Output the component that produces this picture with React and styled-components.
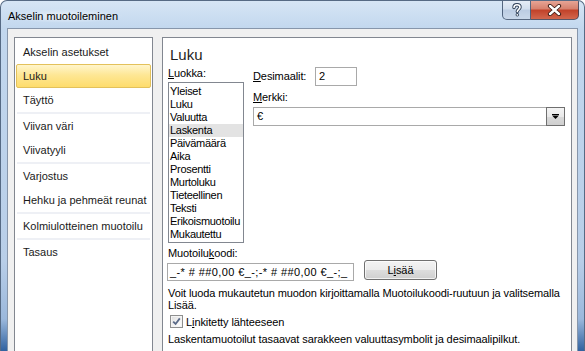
import React, { useState } from "react";
import styled, { createGlobalStyle, css } from "styled-components";

const GlobalStyle = createGlobalStyle`
  html, body {
    margin: 0;
    padding: 0;
  }
  body {
    width: 585px;
    height: 351px;
    overflow: hidden;
    font-family: "Liberation Sans", Arial, sans-serif;
    font-size: 11px;
    color: #000;
  }
`;

const Window = styled.div`
  box-sizing: border-box;
  width: 585px;
  height: 351px;
  display: flex;
  flex-direction: column;
  padding: 0 6px;
  border: 1px solid #566a84;
  border-bottom: none;
  border-radius: 7px 7px 0 0;
  overflow: hidden;
  background: linear-gradient(
    180deg,
    #d6e5f5 0px,
    #c2d7ee 28px,
    #b8cee8 260px,
    #9bb8dc 318px,
    #2d5f9e 351px
  );
`;

const TitleBar = styled.div`
  height: 27px;
  display: flex;
  align-items: flex-start;
  justify-content: space-between;
`;

const TitleText = styled.div`
  margin-top: 8px;
  padding: 0 6px 0 1px;
  line-height: 14px;
  font-size: 11px;
  color: #000;
  background: radial-gradient(ellipse at center, rgba(255, 255, 255, 0.6), rgba(255, 255, 255, 0) 70%);
`;

const CaptionButtons = styled.div`
  display: flex;
  margin-top: -1px;
  margin-right: -1px;
`;

const CaptionButton = styled.div`
  box-sizing: border-box;
  height: 20px;
  display: flex;
  align-items: center;
  justify-content: center;
  border: 1px solid rgba(40, 60, 90, 0.75);
  border-top: none;
  ${p =>
    p.$close
      ? css`
          width: 48px;
          border-left: none;
          border-radius: 0 0 5px 0;
          background: linear-gradient(180deg, #e9a99a 0%, #d7826f 45%, #c2432b 55%, #d2674e 100%);
        `
      : css`
          width: 29px;
          border-radius: 0 0 0 5px;
          background: linear-gradient(180deg, #e7eef7 0%, #d3dfee 45%, #bccde3 55%, #c9d8ea 100%);
        `}
`;

const Client = styled.div`
  flex: 1;
  display: flex;
  gap: 9px;
  padding: 8px 5px 0 6px;
  background: #f0f0f0;
  border: 1px solid #8796ab;
  border-bottom: none;
  min-height: 0;
`;

const NavPanel = styled.div`
  box-sizing: border-box;
  width: 139px;
  flex-shrink: 0;
  padding: 2px 1px 0;
  background: #fff;
  border: 1px solid #828790;
  border-bottom: none;
`;

const NavItem = styled.div`
  box-sizing: border-box;
  height: 24px;
  padding: 0 6px;
  line-height: 22px;
  border: 1px solid transparent;
  border-radius: 2px;
  color: #1a1a1a;
  white-space: nowrap;
  ${p =>
    p.$selected &&
    css`
      border-color: #e3c15b;
      background: linear-gradient(180deg, #fff5cc 0%, #fee795 45%, #fedc6c 100%);
    `}
`;

const NavSeparator = styled.div`
  height: 2px;
  margin: 0 1px;
  background: #eef0f5;
`;

const ContentPanel = styled.div`
  flex: 1;
  box-sizing: border-box;
  padding: 7px 5px 0;
  background: #fff;
  border: 1px solid #828790;
  border-bottom: none;
  letter-spacing: -0.1px;
`;

const Heading = styled.div`
  margin-left: 2px;
  font-size: 15px;
  line-height: 20px;
  letter-spacing: 0;
  color: #1e1e1e;
`;

const TopRow = styled.div`
  display: flex;
  gap: 9px;
  margin-top: 2px;
`;

const CategoryColumn = styled.div`
  width: 76px;
  flex-shrink: 0;
`;

const Label = styled.div`
  line-height: 13px;
  white-space: nowrap;
  margin-top: ${p => p.$gap || 0}px;
`;

const Key = styled.u`
  text-decoration: underline;
  text-underline-offset: 1px;
`;

const ListBox = styled.div`
  box-sizing: border-box;
  margin-top: 2px;
  padding: 2px 0 1px;
  border: 1px solid #828790;
  background: #fff;
  overflow: hidden;
`;

const ListItem = styled.div`
  height: 13px;
  line-height: 13px;
  padding-left: 1px;
  letter-spacing: -0.3px;
  white-space: nowrap;
  background: ${p => (p.$selected ? "#e3e3e3" : "transparent")};
`;

const SettingsColumn = styled.div`
  flex: 1;
  display: flex;
  flex-direction: column;
`;

const FieldRow = styled.div`
  display: flex;
  align-items: center;
`;

const TextBox = styled.div`
  box-sizing: border-box;
  height: ${p => p.$height || 19}px;
  width: ${p => (p.$width ? `${p.$width}px` : "auto")};
  padding: 0 3px;
  line-height: ${p => (p.$height || 19) - 2}px;
  border: 1px solid #a9a9a9;
  background: #fff;
  white-space: nowrap;
  overflow: hidden;
`;

const DecimalsLabel = styled(Label)`
  width: 62px;
`;

const ComboBox = styled.div`
  box-sizing: border-box;
  margin-top: 3px;
  margin-right: 1px;
  height: 19px;
  display: flex;
  border: 1px solid #a9a9a9;
  background: #fff;
`;

const ComboValue = styled.div`
  flex: 1;
  padding-left: 3px;
  line-height: 17px;
`;

const ComboArrow = styled.div`
  box-sizing: border-box;
  width: 19px;
  margin: -1px -1px -1px 0;
  display: flex;
  align-items: center;
  justify-content: center;
  border: 1px solid #6f6f6f;
  background: linear-gradient(180deg, #f4f4f4 0%, #e9e9e9 50%, #d9d9d9 51%, #cfcfcf 100%);
`;

const CodeRow = styled.div`
  display: flex;
  align-items: flex-start;
  gap: 10px;
  margin-left: -1px;
`;

const CodeBox = styled(TextBox)`
  margin-top: 3px;
  padding-left: 2px;
  letter-spacing: 0.4px;
`;

const PushButton = styled.div`
  box-sizing: border-box;
  width: 73px;
  height: 20px;
  line-height: 18px;
  text-align: center;
  border: 1px solid #707070;
  border-radius: 3px;
  background: linear-gradient(180deg, #f3f3f3 0%, #ebebeb 50%, #dddddd 51%, #cfcfcf 100%);
  box-shadow: inset 0 0 0 1px rgba(255, 255, 255, 0.7);
`;

const Paragraph = styled.div`
  margin-top: 6px;
  line-height: 12px;
  white-space: nowrap;
`;

const CheckRow = styled.label`
  display: flex;
  align-items: center;
  gap: 3px;
  margin: 4px 0 0 2px;
  height: 13px;
`;

const CheckBox = styled.span`
  box-sizing: border-box;
  width: 13px;
  height: 13px;
  display: flex;
  align-items: center;
  justify-content: center;
  border: 1px solid #8e8f8f;
  background: linear-gradient(135deg, #dcdcdc 0%, #f5f5f5 60%, #ffffff 100%);
  box-shadow: inset 0 0 0 1px #f4f4f4;
`;

const Note = styled.div`
  margin-top: 5px;
  line-height: 12px;
  white-space: nowrap;
`;

const navGroups = [
  ["Akselin asetukset", "Luku", "Täyttö"],
  ["Viivan väri", "Viivatyyli"],
  ["Varjostus", "Hehku ja pehmeät reunat"],
  ["Kolmiulotteinen muotoilu"],
  ["Tasaus"],
];

const categories = [
  "Yleiset",
  "Luku",
  "Valuutta",
  "Laskenta",
  "Päivämäärä",
  "Aika",
  "Prosentti",
  "Murtoluku",
  "Tieteellinen",
  "Teksti",
  "Erikoismuotoilu",
  "Mukautettu",
];

const HelpGlyph = () => (
  <svg width="12" height="14" viewBox="0 0 12 14">
    <path
      d="M3 4.5 C3 2.5 4.5 1.8 6 1.8 C7.8 1.8 9 2.8 9 4.3 C9 6.2 6.3 6.4 6.3 8.6"
      fill="none"
      stroke="#2e3f57"
      strokeWidth="3.4"
      strokeLinecap="round"
    />
    <circle cx="6.3" cy="11.8" r="1.7" fill="#2e3f57" />
    <path
      d="M3 4.5 C3 2.5 4.5 1.8 6 1.8 C7.8 1.8 9 2.8 9 4.3 C9 6.2 6.3 6.4 6.3 8.6"
      fill="none"
      stroke="#fff"
      strokeWidth="1.6"
      strokeLinecap="round"
    />
    <circle cx="6.3" cy="11.8" r="0.9" fill="#fff" />
  </svg>
);

const CloseGlyph = () => (
  <svg width="15" height="12" viewBox="0 0 15 12">
    <path d="M3 2 L12 10 M12 2 L3 10" stroke="#3b1a14" strokeWidth="4.2" strokeLinecap="round" />
    <path d="M3 2 L12 10 M12 2 L3 10" stroke="#fff" strokeWidth="2.4" strokeLinecap="round" />
  </svg>
);

const ArrowGlyph = () => (
  <svg width="7" height="5" viewBox="0 0 7 5">
    <rect x="0" y="0" width="7" height="1" fill="#000" />
    <path d="M0 1.5 H7 L3.5 5 Z" fill="#000" />
  </svg>
);

const CheckGlyph = () => (
  <svg width="9" height="9" viewBox="0 0 9 9">
    <path d="M1.2 4.6 L3.6 7 L7.8 1.4" fill="none" stroke="#5a6a88" strokeWidth="1.8" />
  </svg>
);

const App = () => {
  const [selectedNav] = useState("Luku");
  const [selectedCategory] = useState("Laskenta");
  const [linked, setLinked] = useState(true);

  return (
    <>
      <GlobalStyle />
      <Window>
        <TitleBar>
          <TitleText>Akselin muotoileminen</TitleText>
          <CaptionButtons>
            <CaptionButton>
              <HelpGlyph />
            </CaptionButton>
            <CaptionButton $close>
              <CloseGlyph />
            </CaptionButton>
          </CaptionButtons>
        </TitleBar>
        <Client>
          <NavPanel>
            {navGroups.map((group, gi) => (
              <React.Fragment key={gi}>
                {gi > 0 && <NavSeparator />}
                {group.map(item => (
                  <NavItem key={item} $selected={item === selectedNav}>
                    {item}
                  </NavItem>
                ))}
              </React.Fragment>
            ))}
          </NavPanel>
          <ContentPanel>
            <Heading>Luku</Heading>
            <TopRow>
              <CategoryColumn>
                <Label>
                  <Key>L</Key>uokka:
                </Label>
                <ListBox>
                  {categories.map(c => (
                    <ListItem key={c} $selected={c === selectedCategory}>
                      {c}
                    </ListItem>
                  ))}
                </ListBox>
              </CategoryColumn>
              <SettingsColumn>
                <FieldRow>
                  <DecimalsLabel>
                    <Key>D</Key>esimaalit:
                  </DecimalsLabel>
                  <TextBox $width={42}>2</TextBox>
                </FieldRow>
                <Label $gap={5}>
                  <Key>M</Key>erkki:
                </Label>
                <ComboBox>
                  <ComboValue>€</ComboValue>
                  <ComboArrow>
                    <ArrowGlyph />
                  </ComboArrow>
                </ComboBox>
              </SettingsColumn>
            </TopRow>
            <Label $gap={4}>
              Muotoilu<Key>k</Key>oodi:
            </Label>
            <CodeRow>
              <CodeBox $width={187} $height={18}>
                _-* # ##0,00 €_-;-* # ##0,00 €_-;_
              </CodeBox>
              <PushButton>
                L<Key>i</Key>sää
              </PushButton>
            </CodeRow>
            <Paragraph>
              Voit luoda mukautetun muodon kirjoittamalla Muotoilukoodi-ruutuun ja valitsemalla
              <br />
              Lisää.
            </Paragraph>
            <CheckRow onClick={() => setLinked(!linked)}>
              <CheckBox>{linked && <CheckGlyph />}</CheckBox>
              <span>
                L<Key>i</Key>nkitetty lähteeseen
              </span>
            </CheckRow>
            <Note>Laskentamuotoilut tasaavat sarakkeen valuuttasymbolit ja desimaalipilkut.</Note>
          </ContentPanel>
        </Client>
      </Window>
    </>
  );
};

export default App;
